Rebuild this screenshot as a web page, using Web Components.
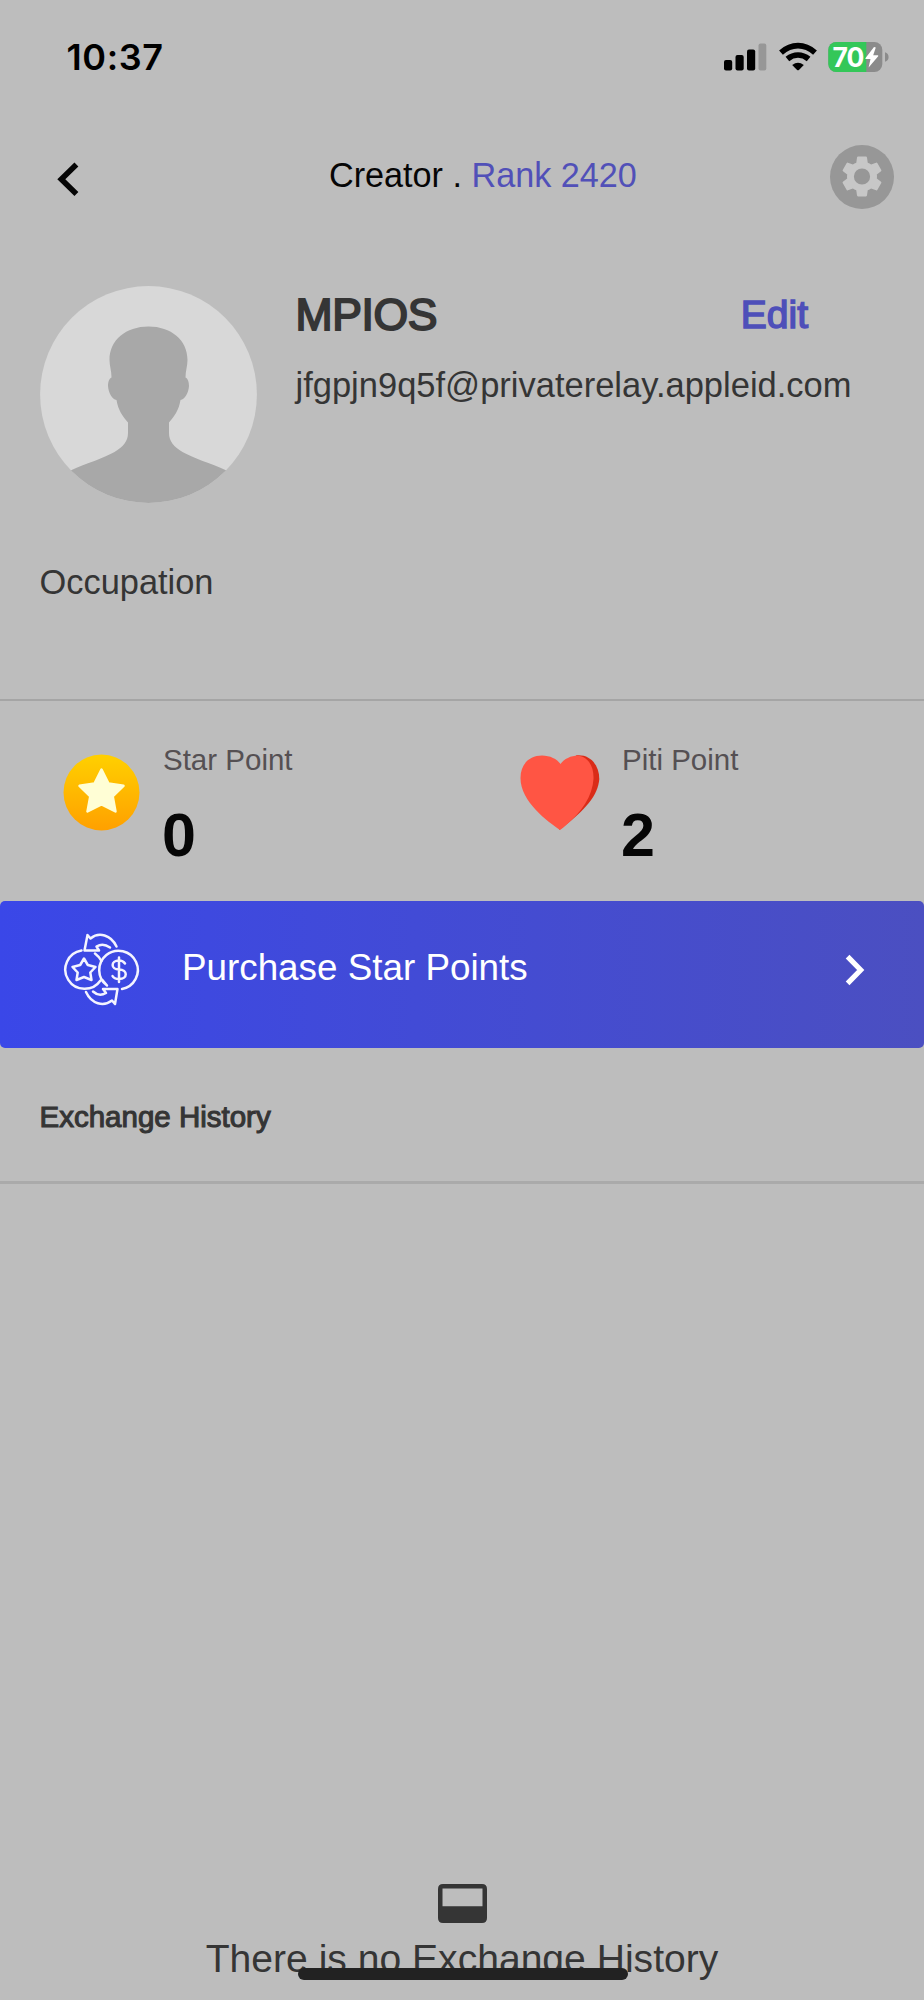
<!DOCTYPE html>
<html lang="en">
<head>
<meta charset="utf-8">
<title>Creator profile</title>
<style>
html,body{margin:0;background:#bdbdbd;font-family:"Liberation Sans",Arial,sans-serif;color:#353535}
</style>
</head>
<body>
<profile-screen></profile-screen>
<script>
const define = (name, html) => customElements.define(name, class extends HTMLElement {
  constructor() {
    super();
    const t = document.createElement('template');
    t.innerHTML = html;
    this.attachShadow({ mode: 'open' }).append(t.content.cloneNode(true));
  }
});

define('status-bar', `
<style>
:host{display:flex;align-items:center;height:114px;padding:0 34px 0 66.500px;box-sizing:border-box;color:#000}
.time{font:600 36px/44px Inter,sans-serif;letter-spacing:.6px;flex:1}
svg{display:block}
.wifi{margin:0 11px 0 12px}
.bat{display:grid}
.bat>*{grid-area:1/1}
.pct{font:700 26.500px/30px Inter,sans-serif;color:#fff;padding-left:4.500px;letter-spacing:-1px;z-index:1}
</style>
<span class="time">10:37</span>
<svg width="43" height="30" viewBox="0 0 43 30"><g fill="#000"><rect y="18" width="8.2" height="10.4" rx="2"/><rect x="11.5" y="13" width="8.2" height="15.4" rx="2"/><rect x="23" y="7.5" width="8.2" height="20.9" rx="2"/></g><rect x="34.5" y="1.5" width="7.8" height="26.9" rx="2" fill="#979797"/></svg>
<svg class="wifi" width="38" height="30" viewBox="0 0 38 30"><g fill="none" stroke="#000" stroke-width="5.7"><path d="M2 10.7Q9.8 3.7 19 3.7T36 10.7"/><path d="M8.4 17Q13.2 13 19 13T29.6 17"/></g><path d="M13.2 23.1Q19 18.2 24.8 23.1L19.9 27.9Q19 28.7 18.1 27.9Z"/></svg>
<div class="bat">
<svg width="62" height="30" viewBox="0 0 62 30"><defs><clipPath id="b"><rect x=".3" width="54" height="30" rx="8"/></clipPath></defs><g clip-path="url(#b)"><rect width="55" height="30" fill="#8b8b8b"/><rect width="38.3" height="30" fill="#34c759"/></g><path d="M57 10.2Q60.6 11.4 60.6 15T57 19.8Z" fill="#8b8b8b"/><path d="M46 5 37.4 16.2Q37 17 38 17H42.5L40.6 25.5 50.2 14.2Q50.6 13.2 49.6 13.2H45.2L47.8 5.6Z" fill="#fff"/></svg>
<span class="pct">70</span></div>`);

define('nav-bar', `
<style>
:host{display:grid;grid-template-columns:64px 1fr 64px;align-items:center;height:126px;padding:0 30px 0 56px;box-sizing:border-box;color:#060606}
svg{display:block}
.title{font-size:34.200px;line-height:40px;padding:0 0 4px 209px;white-space:pre}
.back{margin-top:3px}
b{font-weight:400;color:#5150b8}
</style>
<svg class="back" width="24" height="36" viewBox="0 0 24 36"><path d="M20.4 3.4 5.3 18.2 20.4 33" fill="none" stroke="#060606" stroke-width="5.6"/></svg>
<div class="title">Creator . <b>Rank 2420</b></div>
<svg width="64" height="64" viewBox="0 0 64 64"><circle cx="32" cy="32" r="32" fill="#979797"/><g transform="translate(32 31.5) scale(2.08) translate(-12 -12)"><path fill="#c7c7c7" d="M19.14 12.94c.04-.3.06-.61.06-.94 0-.32-.02-.64-.07-.94l2.03-1.58c.18-.14.23-.41.12-.61l-1.92-3.32c-.12-.22-.37-.29-.59-.22l-2.39.96c-.5-.38-1.03-.7-1.62-.94l-.36-2.54c-.04-.24-.24-.41-.48-.41h-3.84c-.24 0-.43.17-.47.41l-.36 2.54c-.59.24-1.13.57-1.62.94l-2.39-.96c-.22-.08-.47 0-.59.22L2.74 8.87c-.12.21-.08.47.12.61l2.03 1.58c-.05.3-.09.63-.09.94s.02.64.07.94l-2.03 1.58c-.18.14-.23.41-.12.61l1.92 3.32c.12.22.37.29.59.22l2.39-.96c.5.38 1.03.7 1.62.94l.36 2.54c.05.24.24.41.48.41h3.84c.24 0 .44-.17.47-.41l.36-2.54c.59-.24 1.13-.56 1.62-.94l2.39.96c.22.08.47 0 .59-.22l1.92-3.32c.12-.22.07-.47-.12-.61l-2.01-1.58zM12 15.9a3.9 3.9 0 1 1 0-7.8 3.9 3.9 0 0 1 0 7.8z"/></g></svg>`);

define('user-avatar', `
<style>:host{display:block;width:217px;height:217px}svg{display:block}</style>
<svg width="217" height="217" viewBox="0 0 217 217"><defs><clipPath id="c"><circle cx="108.5" cy="108.5" r="108.4"/></clipPath></defs><g clip-path="url(#c)"><rect width="217" height="217" fill="#d8d8d8"/><path fill="#a8a8a8" d="M108.500 40.500C131 40.500 147.500 54 147.500 74C147.500 80 145.500 85 145.500 91.500C148 92.500 149 96.500 149 100C148.500 107 145 113 140.500 114C139 124 134 131 129 136.500V147C129 155 134 161 142.500 166C154 172.500 170 177 186.500 184.500L217 217H0L30.500 184.500C47 177 63 172.500 74.500 166C83 161 88 155 88 147V136.500C83 131 78 124 76.500 114C72 113 68.500 107 68 100C68 96.500 69 92.500 71.500 91.500C71.500 85 69.500 80 69.500 74C69.500 54 86 40.500 108.500 40.500Z"/></g></svg>`);

define('profile-card', `
<style>
:host{display:block;height:461px;box-sizing:border-box;padding:45.500px 0 0 39.500px;border-bottom:2px solid #a5a5a5}
.top{display:flex;gap:39px}
.info{flex:1}
.row{display:flex;justify-content:space-between;align-items:center;height:58px;padding-right:116px}
::slotted([slot=name]){font-size:44.500px;line-height:50px;letter-spacing:-.4px;-webkit-text-stroke:1.900px #353535}
.edit{font-size:39px;line-height:44px;color:#4e4fb9;-webkit-text-stroke:1.500px #4e4fb9}
::slotted([slot=mail]){display:block;margin-top:21px;font-size:34.500px;line-height:40px;white-space:nowrap}
.occ{font-size:34.400px;line-height:40px;margin-top:59px}
</style>
<div class="top"><user-avatar></user-avatar><div class="info"><div class="row"><slot name="name"></slot><span class="edit">Edit</span></div><slot name="mail"></slot></div></div>
<div class="occ">Occupation</div>`);

define('point-tile', `
<style>
:host{display:flex;padding:42px 0 0 62px;gap:22px}
.icon{width:79px;padding-top:9px}
.label{font-size:29.500px;line-height:34px;color:#555053}
.value{font:700 61px/64px "Liberation Sans",sans-serif;color:#060606;margin:26px 0 0 -1px}
</style>
<div class="icon"><slot name="icon"></slot></div>
<div><div class="label"><slot name="label"></slot></div><div class="value"><slot></slot></div></div>`);

define('star-coin', `
<style>:host{display:block}svg{display:block}</style>
<svg width="80" height="80" viewBox="0 0 80 80"><defs><linearGradient id="g" x2="0" y2="1"><stop stop-color="#ffd000"/><stop offset="1" stop-color="#ffa000"/></linearGradient></defs><circle cx="39.500" cy="40.500" r="38" fill="url(#g)"/><path d="M39.500 17.500 46.500 31.500 61.500 33.800 50.700 44.300 53.500 59.500 39.500 52.500 25.500 59.500 28.300 44.300 17.500 33.800 32.500 31.500Z" fill="#fffed5" stroke="#fffed5" stroke-width="2.500" stroke-linejoin="round"/></svg>`);

define('heart-icon', `
<style>:host{display:block}svg{display:block;overflow:visible}</style>
<svg width="80" height="80" viewBox="0 0 80 80"><path fill="#da2c18" d="M55 3.500C70 2 78.300 14 78.300 27C77 43 65 58 38 78Z"/><path fill="#ff5544" d="M39 78C27 69.500 -.5 50 -.5 26C-.5 12 8.500 3.500 21 3.500C29 3.500 36 7 39.500 12C43 7 50 3.500 57 3.500C67 5 73 14 72.500 27C71.500 44 61 60 43 75Z"/></svg>`);

define('purchase-banner', `
<style>
:host{display:flex;align-items:center;height:147px;box-sizing:border-box;padding:0 58px 9px 62px;border-radius:5px;background:linear-gradient(90deg,#3a47e8,#424bd6 45%,#4b4fc1);color:#fff}
svg{display:block;flex:none}
.t{font-size:36.800px;line-height:44px;flex:1;margin:-5px 0 0 40px;white-space:nowrap}
</style>
<svg width="80" height="80" viewBox="0 0 80 80" fill="none" stroke="#f4f4ff" stroke-width="2.500" stroke-linecap="round" stroke-linejoin="round"><path d="M60 59A19.300 19.300 0 1 0 45 55.500L40 49.500"/><path d="M19.500 20.500A19.300 19.300 0 1 0 38.500 50.500M33 23.500Q37 26.500 39.500 31"/><path d="M22 28.500 25.800 35 33.500 37 28.300 42.500 29.500 50 22 47 14.500 50 15.700 42.500 10.500 37 18.200 35Z"/><path d="M63 33.500Q61 30.500 57 30.500C48.500 30.500 48.500 39.500 57 39.500C66 39.500 66 49 57 49Q52 49 50.500 46M57 27.500V52"/><path d="M54.500 16.500C49 5 37 1.500 28.500 8.500L25.500 5 22.500 20.500H37L34.500 16.500Q41 12.500 48 17.500M24 62C29.500 74 41.500 77 50 70.500L53 74 55.500 59H41L44 63Q37 67 31 61.500"/></svg>
<span class="t"><slot></slot></span>
<svg width="22" height="34" viewBox="0 0 22 34"><path d="M3.600 3.600 16.700 17 3.600 30.400" fill="none" stroke="#fff" stroke-width="5.200"/></svg>`);

define('section-header', `
<style>:host{display:block;height:136px;box-sizing:border-box;padding:49px 0 0 39.500px;border-bottom:3px solid #aaa;font-size:29.500px;line-height:40px;-webkit-text-stroke:1.100px #353535}</style><slot></slot>`);

define('empty-state', `
<style>
:host{display:flex;flex-direction:column;align-items:center;justify-content:flex-end;flex:1;padding-bottom:19px;font-size:39.100px;line-height:44px}
svg{display:block;margin-bottom:14px}
</style>
<svg width="49" height="39" viewBox="0 0 49 39"><path fill="#353535" fill-rule="evenodd" d="M5 0H44Q49 0 49 5V34Q49 39 44 39H5Q0 39 0 34V5Q0 0 5 0ZM4.500 4.600V22.200H44.500V4.600Z"/></svg>
<div><slot></slot></div>`);

define('home-indicator', `
<style>:host{position:absolute;left:50%;bottom:20px;width:330px;height:12.500px;margin-left:-164.500px;border-radius:7px;background:#222}</style>`);

define('profile-screen', `
<style>
:host{display:flex;flex-direction:column;position:relative;width:924px;height:2000px;overflow:hidden;background:#bdbdbd}
status-bar,nav-bar,profile-card,purchase-banner,section-header{flex:none}
.points{display:grid;grid-template-columns:459px 1fr;height:200px;flex:none}
</style>
<status-bar></status-bar>
<nav-bar></nav-bar>
<profile-card><span slot="name">MPIOS</span><span slot="mail">jfgpjn9q5f@privaterelay.appleid.com</span></profile-card>
<div class="points">
<point-tile><star-coin slot="icon"></star-coin><span slot="label">Star Point</span>0</point-tile>
<point-tile><heart-icon slot="icon"></heart-icon><span slot="label">Piti Point</span>2</point-tile>
</div>
<purchase-banner>Purchase Star Points</purchase-banner>
<section-header>Exchange History</section-header>
<empty-state>There is no Exchange History</empty-state>
<home-indicator></home-indicator>`);
</script>
</body>
</html>
